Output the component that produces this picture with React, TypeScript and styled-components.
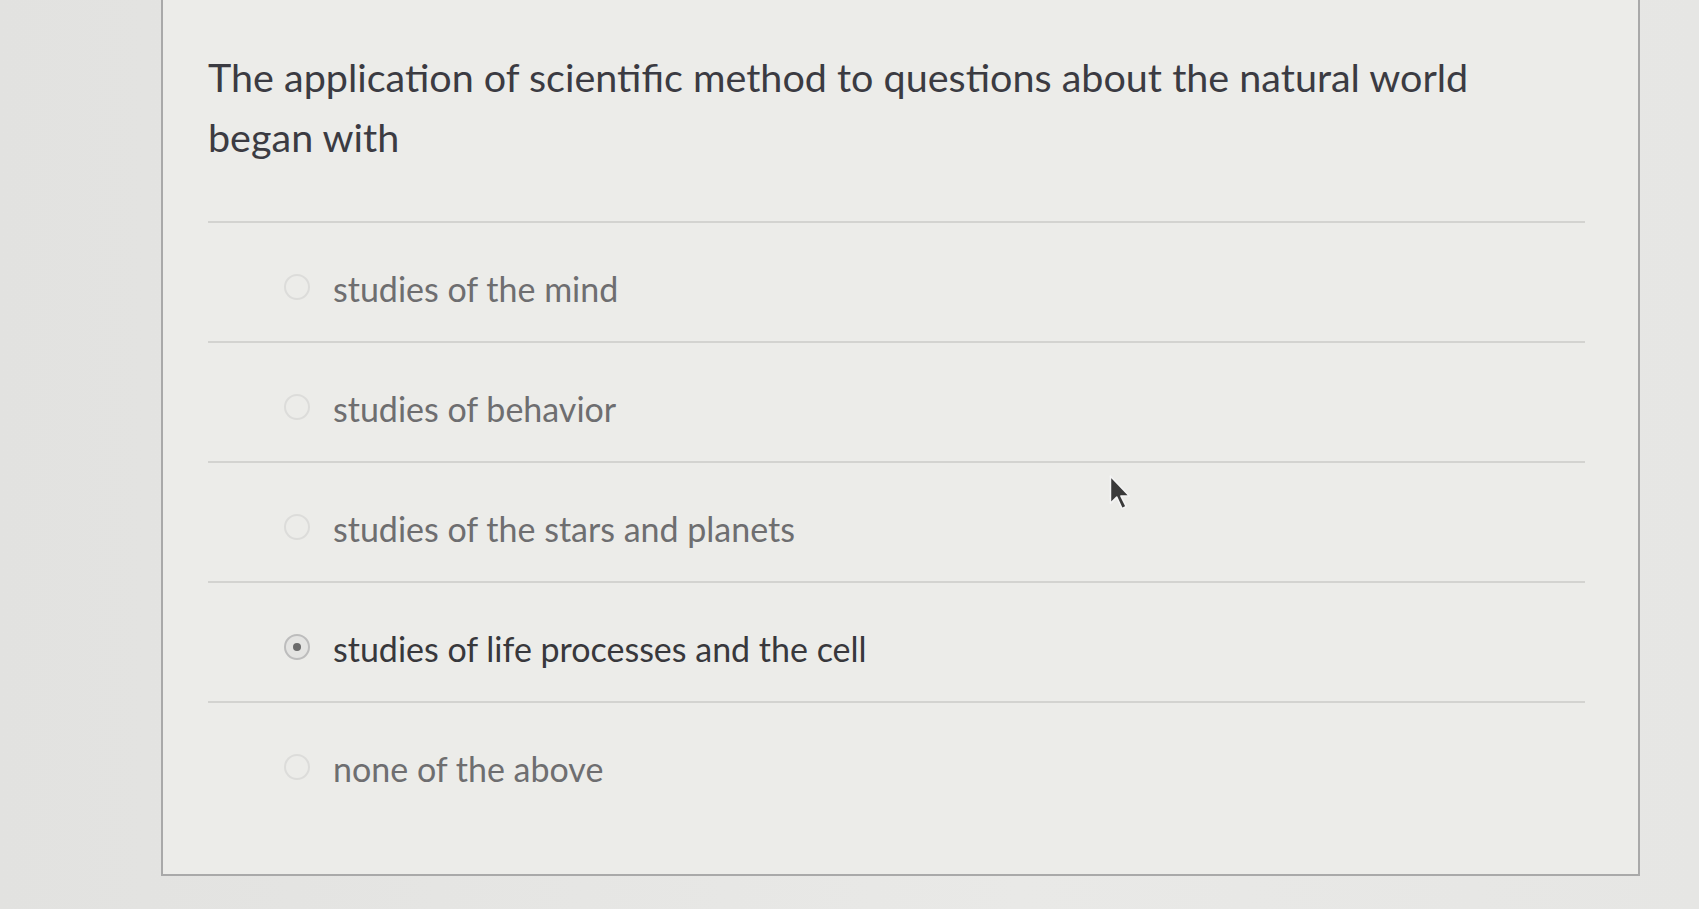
import React from "react";
import styled, { createGlobalStyle } from "styled-components";

const Global = createGlobalStyle`
  html, body { margin: 0; padding: 0; }
  body {
    background: #e4e4e2;
    font-family: Lato, "Noto Sans", sans-serif;
    overflow: hidden;
  }
`;

const Page = styled.div`
  position: relative;
  width: 1699px;
  height: 909px;
  padding-left: 161px;
  box-sizing: border-box;
  background: linear-gradient(90deg, #e2e2e0 0%, #e9e9e7 60%, #e6e6e4 100%);
`;

const Card = styled.div`
  width: 1479px;
  box-sizing: border-box;
  background: #ecece9;
  border: 2px solid #a9a9a9;
  border-top: none;
  padding: 47px 53px 53px 45px;
`;

const Question = styled.p`
  margin: 0 0 54px;
  max-width: 1300px;
  font-size: 39.5px;
  line-height: 60px;
  color: #3b3b42;
  font-weight: 400;
`;

const Options = styled.div`
  display: flex;
  flex-direction: column;
`;

const Option = styled.label<{ $selected?: boolean }>`
  display: flex;
  align-items: center;
  gap: 23px;
  border-top: 2px solid #d3d3d0;
  padding: 46px 0 32px 76px;
  font-size: 34px;
  line-height: 40px;
  color: ${(p) => (p.$selected ? "#38383c" : "#6e6e70")};
`;

const Radio = styled.span<{ $selected?: boolean }>`
  flex: none;
  width: 22px;
  height: 22px;
  border-radius: 50%;
  border: 2px solid ${(p) => (p.$selected ? "#bdbdbd" : "#dcdcda")};
  background: ${(p) => (p.$selected ? "#e4e4e2" : "transparent")};
  display: flex;
  align-items: center;
  justify-content: center;
  margin-top: -4px;
  &::after {
    content: "";
    width: 8px;
    height: 8px;
    border-radius: 50%;
    background: #6a6a6a;
    display: ${(p) => (p.$selected ? "block" : "none")};
  }
`;

const Cursor = styled.svg`
  position: absolute;
  left: 1108px;
  top: 474px;
  width: 28px;
  height: 42px;
`;

const options = [
  "studies of the mind",
  "studies of behavior",
  "studies of the stars and planets",
  "studies of life processes and the cell",
  "none of the above",
];

export default function App() {
  return (
    <Page>
      <Global />
      <Card>
        <Question>
          The application of scientific method to questions about the natural world began with
        </Question>
        <Options>
          {options.map((o, i) => (
            <Option key={o} $selected={i === 3}>
              <Radio $selected={i === 3} />
              {o}
            </Option>
          ))}
        </Options>
      </Card>
      <Cursor viewBox="0 0 26 40">
        <path
          d="M2 2 L2 28 L8 22 L13 33 L17 31 L12 21 L20 21 Z"
          fill="#3a3a3a"
          stroke="#f4f4f4"
          strokeWidth="1.5"
          strokeLinejoin="round"
        />
      </Cursor>
    </Page>
  );
}
